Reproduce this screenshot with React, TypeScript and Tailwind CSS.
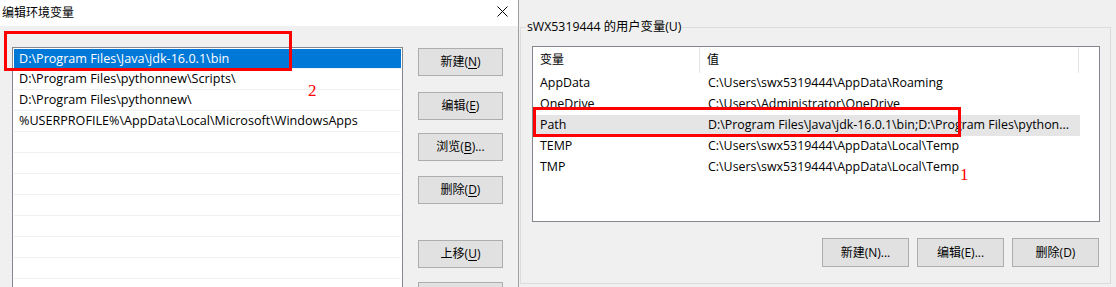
import React from 'react';

const font = 'font-["Segoe_UI","Open_Sans","Noto_Sans_CJK_SC",sans-serif]';

const paths = [
  'D:\\Program Files\\Java\\jdk-16.0.1\\bin',
  'D:\\Program Files\\pythonnew\\Scripts\\',
  'D:\\Program Files\\pythonnew\\',
  '%USERPROFILE%\\AppData\\Local\\Microsoft\\WindowsApps',
  '', '', '', '', '', '', '', '', '',
];

const userVars = [
  { name: 'AppData', value: 'C:\\Users\\swx5319444\\AppData\\Roaming' },
  { name: 'OneDrive', value: 'C:\\Users\\Administrator\\OneDrive' },
  { name: 'Path', value: 'D:\\Program Files\\Java\\jdk-16.0.1\\bin;D:\\Program Files\\python...' },
  { name: 'TEMP', value: 'C:\\Users\\swx5319444\\AppData\\Local\\Temp' },
  { name: 'TMP', value: 'C:\\Users\\swx5319444\\AppData\\Local\\Temp' },
];

const WinButton = ({ label, hot, rest, className }: { label?: string; hot?: string; rest?: string; className?: string }) => (
  <button className={`h-[28px] w-[85px] shrink-0 border border-[#adadad] bg-[#e1e1e1] text-[12px] text-black ${className ?? ''}`}>
    {label}
    {hot && (
      <>
        (<span className="underline underline-offset-2">{hot}</span>){rest}
      </>
    )}
  </button>
);

export default function App() {
  return (
    <div className={`relative flex h-[287px] w-[1116px] overflow-hidden bg-[#f0f0f0] text-black ${font}`}>
      {/* left dialog */}
      <div className="flex w-[519px] shrink-0 flex-col overflow-hidden border-r border-[#a0a0a0]">
        <div className="flex h-[26px] shrink-0 items-center justify-between bg-white pl-[2px] pr-[10px]">
          <span className="text-[12px]">编辑环境变量</span>
          <svg width="11" height="11" viewBox="0 0 11 11" className="mb-[4px]">
            <path d="M0.5 0.5 L10.5 10.5 M10.5 0.5 L0.5 10.5" stroke="#000" strokeWidth="1" />
          </svg>
        </div>
        <div className="flex shrink-0 pl-[12px] pt-[21px]">
          <div className="h-[260px] w-[391px] shrink-0 border border-[#828790] bg-white">
            {paths.map((p, i) => (
              <div
                key={i}
                className={`mx-[1px] flex items-center border-b border-[#f0f0f0] pl-[5px] pt-[1px] text-[12.6px] ${
                  i === 0 ? 'mt-[1px] h-[20px] bg-[#0078d7] text-white' : 'h-[21px]'
                }`}
              >
                {p}
              </div>
            ))}
          </div>
          <div className="ml-[15px] flex flex-col">
            <WinButton label="新建" hot="N" className="mt-[1px]" />
            <WinButton label="编辑" hot="E" className="mt-[16px]" />
            <WinButton label="浏览" hot="B" rest="..." className="mt-[13px]" />
            <WinButton label="删除" hot="D" className="mt-[15px]" />
            <WinButton label="上移" hot="U" className="mt-[36px]" />
            <WinButton className="mt-[14px]" />
          </div>
        </div>
      </div>

      {/* right dialog */}
      <div className="flex-1 pl-[1px] pt-[27px]">
        <div className="relative h-[257px] w-[591px] border border-[#dcdcdc]">
          <span className="absolute left-[5px] top-[-10px] bg-[#f0f0f0] px-[1px] text-[12.3px]">sWX5319444 的用户变量(U)</span>
          <div className="ml-[11px] mt-[18px] h-[176px] w-[568px] border border-[#828790] bg-white">
            <div className="flex h-[26px] items-center text-[12px]">
              <div className="flex h-full w-[167px] items-center border-r border-[#e5e5e5] pl-[7px]">变量</div>
              <div className="flex h-full w-[379px] items-center border-r border-[#e5e5e5] pl-[7px]">值</div>
            </div>
            {userVars.map((v) => (
              <div
                key={v.name}
                className={`flex h-[21px] w-[547px] items-center text-[12.4px] ${v.name === 'Path' ? 'bg-[#e5e5e5]' : ''}`}
              >
                <div className="w-[168px] shrink-0 pl-[7px]">{v.name}</div>
                <div className="whitespace-nowrap pl-[7px]">{v.value}</div>
              </div>
            ))}
          </div>
          <div className="mt-[16px] flex justify-end gap-[8px] pr-[11px]">
            <button className="h-[29px] w-[87px] border border-[#adadad] bg-[#e1e1e1] text-[12px]">新建(N)...</button>
            <button className="h-[29px] w-[87px] border border-[#adadad] bg-[#e1e1e1] text-[12px]">编辑(E)...</button>
            <button className="h-[29px] w-[87px] border border-[#adadad] bg-[#e1e1e1] text-[12px]">删除(D)</button>
          </div>
        </div>
      </div>

      {/* annotations */}
      <div className="absolute left-[4px] top-[31px] h-[40px] w-[288px] border-[3px] border-[#ff0000]" />
      <div className="absolute left-[533px] top-[107px] h-[30px] w-[428px] border-[3px] border-[#ff0000]" />
      <span className='absolute left-[308px] top-[78px] font-["Liberation_Serif",serif] text-[17px] text-[#ff0000]'>2</span>
      <span className='absolute left-[960px] top-[162px] font-["Liberation_Serif",serif] text-[17px] text-[#ff0000]'>1</span>
    </div>
  );
}
